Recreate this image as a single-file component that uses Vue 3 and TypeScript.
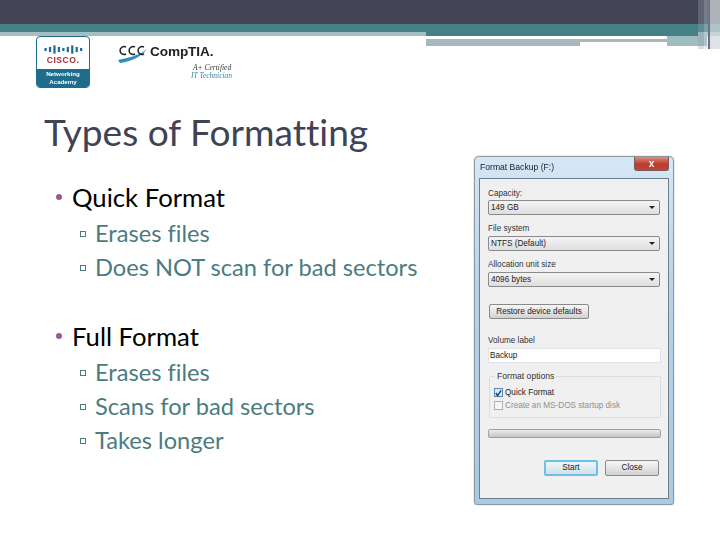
<script setup lang="ts">
interface Topic { name: string; items: string[] }
const topics: Topic[] = [
  { name: 'Quick Format', items: ['Erases files', 'Does NOT scan for bad sectors'] },
  { name: 'Full Format', items: ['Erases files', 'Scans for bad sectors', 'Takes longer'] },
]
const bars: [number, number][] = [[2,3],[8,5],[14,8],[20,5],[26,3],[32,5],[38,8],[44,5],[50,3]]
</script>

<template>
  <div class="page">
    <header class="bands">
      <div class="dark"></div>
      <div class="teal"></div>
      <div class="light"></div>
      <div class="deco" aria-hidden="true">
        <i class="d-teal"></i><i class="d-white"></i><i class="d-grey"></i><i class="d-grey2"></i><i class="d-end"></i>
        <i class="s s1"></i><i class="s s2"></i><i class="s s3"></i><i class="s s4"></i>
      </div>
    </header>

    <div class="logos">
      <div class="cisco">
        <div class="cisco-top">
          <svg width="40" height="11" viewBox="0 0 54 12">
            <rect v-for="b in bars" :key="b[0]" :x="b[0]" :y="6 - b[1] * 0.7" width="3" :height="b[1] * 1.4" fill="#1f6d8c" />
          </svg>
          <span class="cisco-word">CISCO.</span>
        </div>
        <div class="cisco-bottom"><span>Networking</span><span>Academy</span></div>
      </div>
      <div class="comptia">
        <div class="comp-row">
          <svg width="32" height="22" viewBox="0 0 32 22">
            <path d="M1 18 C9 16 22 14 30 7 C25 15 12 20 3 21 Z" fill="#2f8fbf" />
            <path d="M9 5 A4 4 0 1 0 9 12 M18 5 A4 4 0 1 0 18 12 M27 5 A4 4 0 1 0 27 12" fill="none" stroke="#222" stroke-width="1.5" />
          </svg>
          <span class="comp-word">CompTIA.</span>
        </div>
        <div class="cert">A+ Certified</div>
        <div class="tech">IT Technician</div>
      </div>
    </div>

    <main class="body">
      <section class="text">
        <h1>Types of Formatting</h1>
        <div v-for="t in topics" :key="t.name" class="topic">
          <div class="lvl1"><span class="dot"></span>{{ t.name }}</div>
          <ul>
            <li v-for="it in t.items" :key="it"><span class="sq"></span>{{ it }}</li>
          </ul>
        </div>
      </section>

      <section class="win">
        <div class="titlebar">
          <span>Format Backup (F:)</span>
          <span class="close">x</span>
        </div>
        <div class="panel">
          <label>Capacity:</label>
          <div class="sel">149 GB<b></b></div>
          <label class="l2">File system</label>
          <div class="sel">NTFS (Default)<b></b></div>
          <label class="l2">Allocation unit size</label>
          <div class="sel">4096 bytes<b></b></div>
          <div class="btn restore">Restore device defaults</div>
          <label class="l3">Volume label</label>
          <div class="input">Backup</div>
          <fieldset>
            <legend>Format options</legend>
            <div class="chk"><span class="box on"><svg width="8" height="8" viewBox="0 0 8 8"><path d="M1 4 L3 7 L7 1" fill="none" stroke="#1d3f7a" stroke-width="1.6" /></svg></span>Quick Format</div>
            <div class="chk off"><span class="box"></span>Create an MS-DOS startup disk</div>
          </fieldset>
          <div class="progress"></div>
          <div class="actions">
            <div class="btn start">Start</div>
            <div class="btn">Close</div>
          </div>
        </div>
      </section>
    </main>
  </div>
</template>

<style>
html, body { margin: 0; background: #fff; }
</style>

<style scoped>
.page {
  width: 720px; height: 540px; overflow: hidden; background: #fff; position: relative;
  display: flex; flex-direction: column; font-family: Lato, "Liberation Sans", sans-serif;
  font-variant-ligatures: none;
}
.bands { flex: none; height: 36px; position: relative; }
.dark { height: 24px; background: #424456; }
.teal { height: 8px; background: #458086; }
.light { height: 4px; background: #a3bfc3; }
.deco { position: absolute; left: 426px; top: 24px; width: 294px; height: 26px; }
.deco i { position: absolute; display: block; }
.d-teal { left: 0; top: 8px; width: 272px; height: 4px; background: #458086; }
.d-white { left: 0; top: 12px; width: 241px; height: 3px; background: #fff; }
.d-grey { left: 0; top: 15px; width: 154px; height: 7px; background: #a5b9bc; }
.d-grey2 { left: 154px; top: 15px; width: 87px; height: 3px; background: #a5b9bc; }
.d-end { left: 241px; top: 12px; width: 40px; height: 10px; background: #9fbcc1; }
.s { top: -24px; height: 49px; }
.s1 { left: 272px; width: 6px; background: rgba(150,160,170,.35); }
.s2 { left: 278px; width: 4px; background: rgba(200,210,215,.4); }
.s3 { left: 282px; width: 2px; background: #6d7280; }
.s4 { left: 284px; width: 10px; background: rgba(210,218,222,.75); }

.logos { flex: none; height: 52px; display: flex; gap: 27px; padding-left: 36px; }
.cisco {
  width: 54px; height: 52px; box-sizing: border-box; border: 1px solid #1f6d8c; border-radius: 4px;
  display: flex; flex-direction: column; overflow: hidden; filter: blur(.5px);
}
.cisco-top { flex: 1; display: flex; flex-direction: column; align-items: center; padding-top: 7px; }
.cisco-word { color: #a5303d; font: 700 8.6px/11px "Liberation Sans", sans-serif; letter-spacing: .5px; }
.cisco-bottom {
  height: 18px; background: #1f6d8c; color: #fff; display: flex; flex-direction: column; align-items: center;
  justify-content: center; font: 700 6.2px/8px "Liberation Sans", sans-serif;
}
.comptia { width: 118px; padding-top: 6px; filter: blur(.4px); }
.comp-row { display: flex; align-items: center; height: 22px; }
.comp-word { font: 700 13.6px/20px "Liberation Sans", sans-serif; color: #222; margin: -2px 0 0 1px; letter-spacing: -.1px; white-space: nowrap; }
.cert { font: italic 7.5px/8px "Liberation Serif", serif; color: #333; margin-left: 76px; white-space: nowrap; }
.tech { font: italic 7.5px/8px "Liberation Serif", serif; color: #3a7fa0; margin-left: 74px; white-space: nowrap; }

.body { flex: 1; display: flex; min-height: 0; }
.text { flex: none; width: 474px; padding-left: 44px; box-sizing: border-box; }
h1 { margin: 23px 0 0; font-weight: 400; font-size: 37.1px; line-height: 42px; color: #404354; }
.topic { margin-top: 28px; }
.topic + .topic { margin-top: 36px; }
.lvl1 { font-size: 25.7px; line-height: 32px; color: #000; padding-left: 28px; position: relative; }
.dot { position: absolute; left: 11.5px; top: 13px; width: 6px; height: 6px; border-radius: 50%; background: #9a5a96; }
ul { list-style: none; margin: 3px 0 0; padding: 0; }
li { font-size: 23.65px; line-height: 34px; color: #4a7c80; padding-left: 51px; position: relative; }
.sq { position: absolute; left: 36px; top: 15px; width: 4px; height: 4px; border: 1px solid #4a7c80; }

.win {
  flex: none; width: 200px; height: 349px; margin-top: 68px; box-sizing: border-box; border: 1px solid #8c98a0;
  border-radius: 5px 5px 3px 3px; background: linear-gradient(#d6e7f5, #b5d2ea 40%, #a9cae4);
  padding: 0 4px 5px; display: flex; flex-direction: column; filter: blur(.5px);
  box-shadow: 0 0 1px #555;
}
.titlebar {
  height: 21px; flex: none; display: flex; justify-content: space-between; align-items: flex-start;
  font: 8.6px/21px "Liberation Sans", sans-serif; color: #222; padding-left: 1px;
}
.close {
  width: 35px; height: 14px; background: linear-gradient(#dc8f80, #c0392b 55%, #b5493c); color: #fff; text-align: center;
  font: 700 10px/13px "Liberation Sans", sans-serif; border-radius: 0 0 3px 3px; border: 1px solid #7a5a5a; border-top: 0; box-sizing: border-box;
}
.panel {
  flex: 1; background: #f0f0f0; border: 1px solid #6d7f8c; padding: 8px 8px 0; display: flex; flex-direction: column;
  font: 8.2px/11px "Liberation Sans", sans-serif; color: #333; position: relative;
}
label { display: block; height: 13px; line-height: 13px; }
.l2 { margin-top: 7px; height: 14px; }
.l3 { margin-top: 15px; height: 14px; }
.sel {
  height: 15px; box-sizing: border-box; border: 1px solid #8a8a8a; border-radius: 2px; line-height: 13px; padding-left: 2px;
  background: linear-gradient(#f4f4f4, #dedede); position: relative; color: #222;
}
.sel b {
  position: absolute; right: 4px; top: 5px; width: 0; height: 0; border-left: 3px solid transparent;
  border-right: 3px solid transparent; border-top: 3px solid #222;
}
.btn {
  height: 16px; width: 54px; box-sizing: border-box; border: 1px solid #8a8a8a; border-radius: 2px; text-align: center;
  line-height: 14px; background: linear-gradient(#f6f6f6, #e6e6e6 50%, #d0d0d0); color: #222;
}
.restore { width: 100px; margin: 17px 0 0 1px; height: 15px; line-height: 13px; }
.input { height: 15px; box-sizing: border-box; width: 173px; background: #fff; border: 1px solid #dfe3e8; line-height: 13px; padding-left: 1px; color: #222; }
fieldset {
  margin: 9px 0 0 1px; padding: 5px 0 0 4px; width: 172px; height: 46px; box-sizing: border-box;
  border: 1px solid #d9dde0; border-radius: 2px; display: flex; flex-direction: column;
}
legend { padding: 0 2px; margin-left: 1px; line-height: 9px; font-size: 8.6px; }
.chk { display: flex; align-items: center; gap: 2px; height: 13px; color: #222; }
.chk.off { color: #8f8f8f; }
.box { width: 9px; height: 9px; box-sizing: border-box; border: 1px solid #b0b0b0; background: #f6f6f6; display: flex; align-items: center; justify-content: center; }
.box.on { border-color: #5a86b5; background: #dce9f7; }
.progress { height: 9px; margin-top: 11px; width: 173px; box-sizing: border-box; border: 1px solid #a0a0a0; border-radius: 2px; background: linear-gradient(#ededed, #c4c4c4); }
.actions { display: flex; gap: 7px; margin: 22px 0 0 56px; }
.start { border: 2px solid #6cc0e6; line-height: 12px; background: linear-gradient(#eef6fb, #d3dfe8); }
</style>
